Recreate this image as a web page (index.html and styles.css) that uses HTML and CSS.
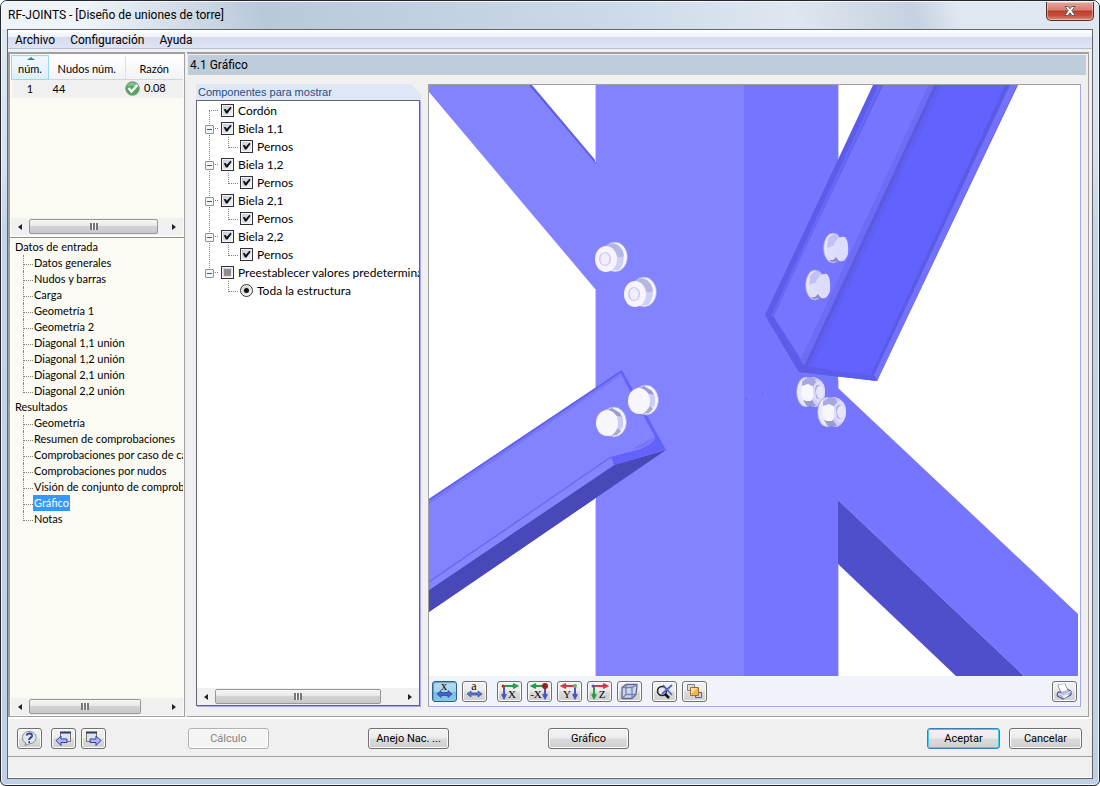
FILE: index.html
```html
<!DOCTYPE html>
<html lang="es">
<head>
    <meta charset="UTF-8">
    <meta name="viewport" content="width=device-width, initial-scale=1.0">
    <title>RF-JOINTS - [Diseño de uniones de torre]</title>
    <link rel="stylesheet" href="styles.css">
</head>
<body>
<div class="window">
    <header class="titlebar">
        <h1>RF-JOINTS - [Diseño de uniones de torre]</h1>
        <button class="close" aria-label="Cerrar">
            <svg width="14" height="12" viewBox="0 0 14 12"><path d="M2 1.500h3.200l1.800 2.300 1.800-2.300h3.200l-3.200 4.200 3.500 4.800H9L7 7.800l-2 2.700H1.700l3.500-4.800z" fill="#fff" stroke="#5b5d6b"/></svg>
        </button>
    </header>

    <div class="client">
        <nav class="menu">
            <a href="#">Archivo</a>
            <a href="#">Configuración</a>
            <a href="#">Ayuda</a>
        </nav>

        <div class="work">
            <aside class="sidebar">
                <div class="cases">
                    <table>
                        <thead>
                            <tr><th class="sorted">núm.</th><th>Nudos núm.</th><th class="ratio">Razón</th></tr>
                        </thead>
                        <tbody>
                            <tr>
                                <td class="num">1</td>
                                <td class="node">44</td>
                                <td class="value"><svg width="15" height="15" viewBox="0 0 15 15"><circle cx="7.500" cy="7.500" r="6.800" fill="#4fa85c" stroke="#8a938c"/><path d="M2 5a6 6 0 0 1 11 0z" fill="#7cc284"/><path d="M3.500 7l3 3.500 6-6.500" fill="none" stroke="#fff" stroke-width="2.400"/></svg>0.08</td>
                            </tr>
                        </tbody>
                    </table>
                    <div class="scrollbar">
                        <button class="arrow prev" aria-label="Izquierda"></button>
                        <div class="track"><div class="thumb thumb-cases"></div></div>
                        <button class="arrow next" aria-label="Derecha"></button>
                    </div>
                </div>

                <div class="navigator">
                    <div class="nav-tree">
                        <h2>Datos de entrada</h2>
                        <ul>
                            <li><a href="#">Datos generales</a></li>
                            <li><a href="#">Nudos y barras</a></li>
                            <li><a href="#">Carga</a></li>
                            <li><a href="#">Geometría 1</a></li>
                            <li><a href="#">Geometría 2</a></li>
                            <li><a href="#">Diagonal 1,1 unión</a></li>
                            <li><a href="#">Diagonal 1,2 unión</a></li>
                            <li><a href="#">Diagonal 2,1 unión</a></li>
                            <li><a href="#">Diagonal 2,2 unión</a></li>
                        </ul>
                        <h2>Resultados</h2>
                        <ul>
                            <li><a href="#">Geometría</a></li>
                            <li><a href="#">Resumen de comprobaciones</a></li>
                            <li><a href="#">Comprobaciones por caso de carga</a></li>
                            <li><a href="#">Comprobaciones por nudos</a></li>
                            <li><a href="#">Visión de conjunto de comprobaciones</a></li>
                            <li><a href="#" class="active">Gráfico</a></li>
                            <li><a href="#">Notas</a></li>
                        </ul>
                    </div>
                    <div class="scrollbar">
                        <button class="arrow prev" aria-label="Izquierda"></button>
                        <div class="track"><div class="thumb thumb-nav"></div></div>
                        <button class="arrow next" aria-label="Derecha"></button>
                    </div>
                </div>
            </aside>

            <main class="panel">
                <h2 class="panel-title">4.1 Gráfico</h2>
                <div class="panel-body">
                    <section class="components">
                        <h3>Componentes para mostrar</h3>
                        <div class="component-box">
                            <ul class="component-tree">
                                <li>
                                    <div class="node-row"><label><input type="checkbox" checked>Cordón</label></div>
                                </li>
                                <li>
                                    <div class="node-row"><button class="expander" aria-label="Contraer"></button><label><input type="checkbox" checked>Biela 1,1</label></div>
                                    <div class="node-row child"><label><input type="checkbox" checked>Pernos</label></div>
                                </li>
                                <li>
                                    <div class="node-row"><button class="expander" aria-label="Contraer"></button><label><input type="checkbox" checked>Biela 1,2</label></div>
                                    <div class="node-row child"><label><input type="checkbox" checked>Pernos</label></div>
                                </li>
                                <li>
                                    <div class="node-row"><button class="expander" aria-label="Contraer"></button><label><input type="checkbox" checked>Biela 2,1</label></div>
                                    <div class="node-row child"><label><input type="checkbox" checked>Pernos</label></div>
                                </li>
                                <li>
                                    <div class="node-row"><button class="expander" aria-label="Contraer"></button><label><input type="checkbox" checked>Biela 2,2</label></div>
                                    <div class="node-row child"><label><input type="checkbox" checked>Pernos</label></div>
                                </li>
                                <li>
                                    <div class="node-row"><button class="expander" aria-label="Contraer"></button><label><input type="checkbox" class="mixed">Preestablecer valores predeterminados</label></div>
                                    <div class="node-row child"><label><input type="radio" name="preset" checked>Toda la estructura</label></div>
                                </li>
                            </ul>
                            <div class="scrollbar">
                                <button class="arrow prev" aria-label="Izquierda"></button>
                                <div class="track"><div class="thumb thumb-comp"></div></div>
                                <button class="arrow next" aria-label="Derecha"></button>
                            </div>
                        </div>
                    </section>

                    <section class="viewer">
                        <svg class="scene" viewBox="429 85 649 591" preserveAspectRatio="xMidYMid slice">
                            <defs>
                                <!-- nut seen from the front left -->
                                <g id="nut-left">
                                    <ellipse cx="4" cy="0" rx="12.500" ry="15" fill="#f6f5ff" stroke="#9a9ad0" stroke-width=".6"/>
                                    <path d="M-3-12L5-13Q12-10 13-1 13 8 8 13L-3 14z" fill="#cfcff9"/>
                                    <path d="M-6-11Q0-15 5-13 11-10 13-2 9 2 6-1L-1-9z" fill="#b6b6e4"/>
                                    <ellipse cx="-5" cy="2" rx="11" ry="13" fill="#f6f5ff"/>
                                    <ellipse cx="-6" cy="2" rx="6" ry="7" fill="#c9c9f5"/>
                                    <ellipse cx="-6" cy="2" rx="4.500" ry="6" fill="#efeeff"/>
                                </g>
                                <!-- bolt head of the lower left diagonal -->
                                <g id="head-left">
                                    <ellipse cx="3" cy="0" rx="12.500" ry="15" fill="#f4f4ff" stroke="#a5a5d5" stroke-width=".8"/>
                                    <path d="M-6-12L1-14 9-9 12-4 12 5 8 12-2 14z" fill="#dadaff"/>
                                    <path d="M-4-12L1-14 9-9 11-5 6-6z" fill="#9c9cce"/>
                                    <path d="M6-6L12-4V5L7 7z" fill="#cbcbf5"/>
                                    <path d="M4 10L7 6 10 9 6 13 0 14z" fill="#a9a9d8"/>
                                    <ellipse cx="-4" cy="1" rx="11" ry="13" fill="#f7f6ff"/>
                                </g>
                                <!-- bolt head of the upper right diagonal -->
                                <g id="head-right">
                                    <ellipse cx="-3" cy="0" rx="9.500" ry="15" fill="#e6e6ff" stroke="#a0a0dc" stroke-width=".8"/>
                                    <path d="M-8-9Q-2-17 3-12L1-3-9 0z" fill="#c1c1f6"/>
                                    <path d="M-9 0L-3-2 0 4 0 9-5 13-9 9z" fill="#dedeff"/>
                                    <path d="M-2-4Q3-13 9-11 13-7 12 6 9 15 3 13-1 9-1 6z" fill="#dcdcff"/>
                                    <path d="M-7 12L-3 12 0 9 3 13-4 14z" fill="#8c8cc2"/>
                                </g>
                                <!-- nut seen from the front right -->
                                <g id="nut-right">
                                    <ellipse cx="-5" cy="0" rx="9.500" ry="15" fill="#e8e8ff" stroke="#9a9ad0" stroke-width=".8"/>
                                    <path d="M-9-13L3-15Q14-12 14-1 14 11 5 15L-6 13z" fill="#cecef9"/>
                                    <path d="M-9-10L-4-14 4-14 5-9 2-6-3-8-9-5z" fill="#a8a8dc"/>
                                    <path d="M-8 8L1 8 5 14-4 14z" fill="#9b9bd0"/>
                                    <path d="M-9-6L-3-8 2-5 3 4 0 9-6 9-10 3z" fill="#f8f7ff"/>
                                    <ellipse cx="8" cy="0" rx="6" ry="11" fill="#dcdcff"/>
                                    <path d="M4-4L6-7H9V7L5 6z" fill="#a9a9df"/>
                                    <ellipse cx="9" cy="0" rx="4" ry="6.500" fill="#e5e5ff"/>
                                </g>
                            </defs>

                            <rect x="429" y="85" width="649" height="591" fill="#fff"/>
                            <!-- upper left diagonal -->
                            <path d="M429 85H531L596 162V290L429 92z" fill="#8383ff"/>
                            <path d="M529 85h3L596 161v3z" fill="#5d5de6"/>
                            <!-- lower right diagonal -->
                            <path d="M838 388L1078 614V676H1024L838 500z" fill="#7575ff"/>
                            <path d="M838 500L1024 676H956L838 564z" fill="#4f4fcb"/>
                            <!-- chord -->
                            <path d="M596 85H744V676H596z" fill="#8383ff"/>
                            <path d="M744 85H838V676H744z" fill="#7575ff"/>
                            <path d="M595.500 85V162M595.500 290V390M595.500 500V676M838.500 85V158M838.500 380V388M838.500 565V676" stroke="#c9c9ff"/>
                            <path d="M746 399h1M762 394h1" stroke="#5050c8"/>

                            <!-- lower left diagonal -->
                            <path d="M429 500L622 370 666 450 429 612z" fill="#8383ff"/>
                            <path d="M429 590L614 465 666 450 429 612z" fill="#4848b9"/>
                            <path d="M429 583L611 458 614 465 429 590z" fill="#8585ff"/>
                            <path d="M429 582L611 457" stroke="#6b6bee" stroke-width="1.500"/>
                            <path d="M429 500L622 371" stroke="#6060ee" stroke-width="2"/>
                            <path d="M429 503L620 375" stroke="#7676f7" stroke-width="2"/>
                            <path d="M620 372L622 370 666 450 614 465 611 457 640 449Q654 443 655 437z" fill="#6363fa"/>
                            <path d="M619 374L654 438Q653 444 640 449L612 456 600 440z" fill="#8383ff"/>
                            <path d="M654 437Q645 442 632 449 650 447 654 437z" fill="#7575f7"/>

                            <!-- upper right diagonal -->
                            <path d="M873 85H1018L877 381 799 372 765 315z" fill="#5c5cea"/>
                            <path d="M883 85H934L804 364 773 316z" fill="#7575ff"/>
                            <path d="M880 85L772 317" stroke="#6868f8" stroke-width="3"/>
                            <path d="M933 85L803 364" stroke="#6c6cf5" stroke-width="8"/>
                            <path d="M941 85H1008L872 376 807 367z" fill="#6262ff"/>
                            <path d="M936 85L806 366" stroke="#5b5be2" stroke-width="3"/>
                            <path d="M940 85L810 366" stroke="#5f5ff2" stroke-width="4"/>
                            <path d="M1007 85L873 374" stroke="#5a5ae5" stroke-width="3"/>
                            <path d="M1010 85h7L877 381 873 377z" fill="#7272fc"/>
                            <path d="M765 315L773 316 804 366 875 376 877 381 799 372z" fill="#5c5ceb"/>

                            <use href="#nut-left" x="611" y="257"/>
                            <use href="#nut-left" x="640" y="292"/>
                            <use href="#head-left" x="611" y="422"/>
                            <use href="#head-left" x="643" y="400"/>
                            <use href="#head-right" x="836" y="248"/>
                            <use href="#head-right" x="818" y="285"/>
                            <use href="#nut-right" x="811" y="392"/>
                            <use href="#nut-right" x="832" y="412"/>
                        </svg>

                        <div class="toolbar">
                            <button class="tool pressed" aria-label="Cotas">
                                <svg width="21" height="17" viewBox="0 0 21 17"><text x="10" y="7" class="glyph small">x</text><path d="M3 11l4-3.500v2h7v-2l4 3.500-4 3.500v-2H7v2z" fill="#4a62d0" stroke="#27408f" stroke-width=".7"/></svg>
                            </button>
                            <button class="tool" aria-label="Valores">
                                <svg width="21" height="17" viewBox="0 0 21 17"><text x="10" y="7" class="glyph small">a</text><path d="M3 11l4-3v2h7V8l4 3-4 3v-2H7v2z" fill="#5c73d8" stroke="#36468f" stroke-width=".7"/></svg>
                            </button>
                            <span class="spacer"></span>
                            <button class="tool" aria-label="Vista X">
                                <svg width="21" height="17" viewBox="0 0 21 17"><path d="M5 4v11M3 11l2 4 2-4" fill="none" stroke="#4a55c8" stroke-width="2"/><path d="M5 3h12M14 1l4 2-4 2" fill="none" stroke="#22a04a" stroke-width="2"/><circle cx="4" cy="3" r="1.500" fill="#c22"/><text x="13" y="15" class="glyph">X</text></svg>
                            </button>
                            <button class="tool" aria-label="Vista -X">
                                <svg width="21" height="17" viewBox="0 0 21 17"><path d="M16 4v11M14 11l2 4 2-4" fill="none" stroke="#4a55c8" stroke-width="2"/><path d="M4 3h10M7 1L3 3l4 2" fill="none" stroke="#22a04a" stroke-width="2"/><circle cx="16" cy="3" r="3" fill="#a11c1c"/><text x="7" y="15" class="glyph">-X</text></svg>
                            </button>
                            <button class="tool" aria-label="Vista Y">
                                <svg width="21" height="17" viewBox="0 0 21 17"><path d="M16 4v11M14 11l2 4 2-4" fill="none" stroke="#4a55c8" stroke-width="2"/><path d="M4 3h11M7 1L3 3l4 2" fill="none" stroke="#d43848" stroke-width="2"/><circle cx="16" cy="3" r="2" fill="#62b46c"/><text x="8" y="15" class="glyph">Y</text></svg>
                            </button>
                            <button class="tool" aria-label="Vista Z">
                                <svg width="21" height="17" viewBox="0 0 21 17"><path d="M5 4v11M3 11l2 4 2-4" fill="none" stroke="#22a04a" stroke-width="2"/><path d="M5 3h12M14 1l4 2-4 2" fill="none" stroke="#d43848" stroke-width="2"/><circle cx="4" cy="3" r="1.500" fill="#4a55c8"/><text x="13" y="15" class="glyph">Z</text></svg>
                            </button>
                            <button class="tool" aria-label="Isométrica">
                                <svg width="21" height="17" viewBox="0 0 21 17"><path d="M3 4.500l4-3h11l-1 10-4 4H3z" fill="#cfd7ee" stroke="#5b6793" stroke-width="1.300"/><path d="M3 4.500h10l5-3M13 4.500v11M7 1.500v10L3 15.500M7 11.500h10" fill="none" stroke="#7481ae" stroke-width="1.300"/></svg>
                            </button>
                            <span class="spacer"></span>
                            <button class="tool" aria-label="Zoom">
                                <svg width="21" height="17" viewBox="0 0 21 17"><circle cx="8" cy="8" r="4.500" fill="#e3e8f3" stroke="#222" stroke-width="1.500"/><path d="M11 11l4 4" stroke="#111" stroke-width="2.500"/><path d="M9 2l9 10M18 2L8 11" stroke="#4a68c8" stroke-width="1.800"/></svg>
                            </button>
                            <button class="tool" aria-label="Capas">
                                <svg width="21" height="17" viewBox="0 0 21 17"><path d="M3.500 1.500h7v6h-7z" fill="#d8dce5" stroke="#777f92"/><path d="M11.500 9.500h6v5h-6z" fill="#cdd3df" stroke="#58637c"/><path d="M6.500 4.500h8v8h-8z" fill="#f2b552" stroke="#a66d22"/><path d="M7 5h6l-6 6z" fill="#ffdfa0"/></svg>
                            </button>
                            <button class="tool print" aria-label="Imprimir">
                                <svg width="21" height="17" viewBox="0 0 21 17"><path d="M4 2l7-1 3 7-7 2z" fill="#fff" stroke="#8790b5"/><path d="M4 9l3 0 6-3 4 2v4l-8 4-6-3z" fill="#b3b9dd" stroke="#3f4677"/><path d="M4.500 2l6-1 3 6-6 2z" fill="#fff"/><path d="M4 10.500l5 2 8-4" fill="none" stroke="#e8eaff"/><path d="M9 13.500l4-2 2 1-5 3z" fill="#fff"/></svg>
                            </button>
                        </div>
                    </section>
                </div>
            </main>
        </div>

        <footer class="actions">
            <div class="action-icons">
                <button class="tool help" aria-label="Ayuda">
                    <svg width="21" height="17" viewBox="0 0 21 17"><path d="M10 1.500c4 0 7 2.500 7 6s-3 6-6 6l-5 2 1-2.500C4.500 12 3.500 10 3.500 7.500c0-3.500 3-6 6.500-6z" fill="#e3e6ed" stroke="#858b99"/><path d="M7.500 5.500c1-3 6-2.500 5.500.5C12.500 8 10 8 10 10M9.500 12h1.500" fill="none" stroke="#34488f" stroke-width="2"/></svg>
                </button>
                <button class="tool" aria-label="Anterior">
                    <svg width="21" height="17" viewBox="0 0 21 17"><path d="M7.500 2.500h10v9h-10z" fill="#dfe3ea" stroke="#777"/><path d="M7 2.500h11" stroke="#333a58" stroke-width="2"/><path d="M3 10.500l5-4.500v3h6v3.500H8v3z" fill="#aab8f5" stroke="#2e3e9e"/></svg>
                </button>
                <button class="tool" aria-label="Siguiente">
                    <svg width="21" height="17" viewBox="0 0 21 17"><path d="M3.500 2.500h10v9h-10z" fill="#dfe3ea" stroke="#777"/><path d="M3 2.500h11" stroke="#333a58" stroke-width="2"/><path d="M18 10.500L13 6v3H7v3.500h6v3z" fill="#aab8f5" stroke="#2e3e9e"/></svg>
                </button>
            </div>
            <div class="action-main">
                <button class="btn" disabled>Cálculo</button>
                <button class="btn">Anejo Nac. ...</button>
                <button class="btn">Gráfico</button>
            </div>
            <div class="action-end">
                <button class="btn default">Aceptar</button>
                <button class="btn">Cancelar</button>
            </div>
        </footer>
        <div class="statusbar"></div>
    </div>
</div>
</body>
</html>
```
FILE: styles.css
```css
* {
    box-sizing: border-box;
}
body {
    margin: 0;
    background-color: #fff;
    font-family: Roboto, "Liberation Sans", sans-serif;
    font-size: 12px;
    color: #000;
}
h1, h2, h3, ul {
    margin: 0;
    padding: 0;
    font-weight: normal;
    font-size: inherit;
    list-style: none;
}
a {
    color: inherit;
    text-decoration: none;
}
button {
    margin: 0;
    padding: 0;
    font-family: inherit;
    font-size: inherit;
    color: inherit;
}

/* Window frame */
.window {
    height: 100vh;
    display: flex;
    flex-direction: column;
    padding: 0 6px 6px;
    border: 1px solid #25272e;
    border-radius: 7px 7px 6px 6px;
    background: linear-gradient(#dfe9f2 0, #d5e2ee 160px, #c4d5e8 230px, #bfd0e4 100%);
    box-shadow: inset 0 0 0 1px #eef5fb;
}
.titlebar {
    display: flex;
    justify-content: space-between;
    height: 28px;
    margin: 0 -6px;
    padding: 0 5px 0 7px;
    border-radius: 6px 6px 0 0;
    background: linear-gradient(75deg, rgba(255,255,255,.5) 8%, rgba(175,193,212,.8) 24%, rgba(190,207,225,.6) 55%, rgba(220,230,240,.5) 72%, rgba(180,194,211,.6) 83%, rgba(222,232,241,.6) 87%);
    border-top: 1px solid #f3f7fb;
}
.titlebar h1 {
    line-height: 26px;
}
.close {
    width: 48px;
    height: 19px;
    border: 1px solid #542c2c;
    border-top: none;
    border-radius: 0 0 5px 5px;
    background: linear-gradient(#e5a59b 0, #d67d70 45%, #bd3a2a 50%, #c4513f 75%, #dc8a76 100%);
    box-shadow: inset 0 0 0 1px rgba(255,255,255,.4);
    display: flex;
    justify-content: center;
    align-items: center;
}
.client {
    flex: 1;
    min-height: 0;
    display: flex;
    flex-direction: column;
    border: 1px solid #63676d;
    background-color: #f0f0f0;
}
.menu {
    display: flex;
    gap: 15px;
    height: 19px;
    padding: 0 7px;
    line-height: 21px;
    border-bottom: 1px solid #b8c0d4;
    background: linear-gradient(#fff 0, #eef0f8 38%, #d7dcee 40%, #dde4f4 100%);
}

/* Main area */
.work {
    flex: 1;
    min-height: 0;
    display: flex;
    gap: 2px;
    padding: 3px 3px 0 0;
}
.sidebar {
    flex: none;
    width: 177px;
    display: flex;
    flex-direction: column;
    border: 1px solid #a0a0a0;
    border-width: 2px 1px 1px 2px;
    font-family: Lato, "Liberation Sans", sans-serif;
    font-size: 11px;
}
.cases {
    height: 184px;
    display: flex;
    flex-direction: column;
    justify-content: space-between;
    padding: 1px 1px 2px;
    border-bottom: 1px solid #8f8f8f;
    background-color: #fbfbf3;
}
.cases table {
    width: 100%;
    table-layout: fixed;
    border-collapse: collapse;
}
.cases th {
    height: 24px;
    padding: 2px 0 0;
    font-weight: normal;
    background: linear-gradient(#fff, #f1f2f4);
    border-right: 1px solid #dfe1e4;
    border-bottom: 1px solid #d5d5d5;
}
.cases th.sorted {
    width: 37px;
    border: 1px solid #96d9f9;
    background: linear-gradient(#f2f9fc, #dceef8);
    position: relative;
}
.cases th.sorted::before {
    content: "";
    position: absolute;
    top: 1px;
    left: 15px;
    border: 4px solid transparent;
    border-top: none;
    border-bottom: 3px solid #3f7ba5;
}
.cases th.ratio {
    width: 58px;
    border-right: none;
}
.cases td {
    height: 18px;
    padding: 0;
    background-color: #f0f0f0;
}
.cases .num {
    text-align: center;
}
.cases .node {
    padding-left: 4px;
}
.cases .value svg {
    vertical-align: -4px;
    margin-right: 4px;
}
.navigator {
    flex: 1;
    min-height: 0;
    display: flex;
    flex-direction: column;
    justify-content: space-between;
    padding: 1px 1px;
    background-color: #fbfbf3;
}
.nav-tree {
    overflow: hidden;
    white-space: nowrap;
    line-height: 16px;
}
.nav-tree h2 {
    padding-left: 4px;
}
.nav-tree ul {
    padding-left: 12px;
}
.nav-tree li {
    display: flex;
    height: 16px;
    position: relative;
    padding-left: 10px;
}
.nav-tree li::before {
    content: "";
    position: absolute;
    left: 0;
    top: 0;
    width: 9px;
    height: 9px;
    border: 1px dotted #808080;
    border-width: 0 0 1px 1px;
}
.nav-tree li:not(:last-child)::after {
    content: "";
    position: absolute;
    left: 0;
    top: 9px;
    height: 7px;
    border-left: 1px dotted #808080;
}
.nav-tree a {
    padding: 0 1px;
}
.nav-tree a.active {
    background-color: #3399ff;
    color: #fff;
}

/* Scroll bars */
.scrollbar {
    flex: none;
    display: flex;
    height: 17px;
    background-color: #f0f0f0;
}
.arrow {
    width: 18px;
    border: none;
    background: none;
    display: flex;
    justify-content: center;
    align-items: center;
}
.arrow::before {
    content: "";
    border: 3px solid transparent;
}
.arrow.prev::before {
    border-left: none;
    border-right: 4px solid #222;
}
.arrow.next::before {
    border-right: none;
    border-left: 4px solid #222;
}
.track {
    flex: 1;
    display: flex;
    padding: 1px 0;
}
.thumb {
    display: flex;
    justify-content: center;
    align-items: center;
    border: 1px solid #979797;
    border-radius: 2px;
    background: linear-gradient(#f6f6f6 0, #e8e8e8 45%, #d2d2d4 50%, #c9c9cb 100%);
}
.thumb::before {
    content: "";
    width: 8px;
    height: 7px;
    background: repeating-linear-gradient(90deg, #777 0 2px, #f4f4f4 2px 3px);
}
.thumb-cases {
    width: 95%;
}
.thumb-nav {
    width: 82%;
}
.thumb-comp {
    width: 89%;
}

/* Right panel */
.panel {
    flex: 1;
    min-width: 0;
    display: flex;
    flex-direction: column;
    padding: 1px 2px 9px 1px;
    border: 1px solid #a0a0a0;
    border-width: 2px 1px 1px 0;
}
.panel-title {
    height: 20px;
    line-height: 21px;
    padding-left: 2px;
    background-color: #bfcdda;
}
.panel-body {
    flex: 1;
    min-height: 0;
    display: flex;
    gap: 7px;
    padding: 9px 5px 0 8px;
}
.components {
    flex: none;
    width: 225px;
    display: flex;
    flex-direction: column;
}
.components h3 {
    height: 16px;
    padding-left: 2px;
    font-family: "Liberation Sans", Arial, sans-serif;
    font-size: 11px;
    line-height: 17px;
    color: #1f4e87;
    background-color: #dde7f5;
    clip-path: polygon(0 0, 215px 0, 100% 10px, 100% 100%, 0 100%);
}
.component-box {
    flex: 1;
    min-height: 0;
    display: flex;
    flex-direction: column;
    justify-content: space-between;
    border: 1px solid #646478;
    box-shadow: 1px 1px 0 #a8a8f0;
    margin: 0 1px 1px 0;
    background-color: #fff;
}
.component-tree {
    overflow: hidden;
    padding-left: 12px;
    font-family: Lato, "Liberation Sans", sans-serif;
    white-space: nowrap;
}
.component-tree li {
    position: relative;
}
.component-tree li:not(:last-child)::before {
    content: "";
    position: absolute;
    left: 0;
    top: 9px;
    height: 100%;
    border-left: 1px dotted #808080;
}
.node-row {
    position: relative;
    display: flex;
    align-items: center;
    height: 18px;
    padding-left: 12px;
}
.node-row::before {
    content: "";
    position: absolute;
    left: 0;
    top: 9px;
    width: 9px;
    border-top: 1px dotted #808080;
}
.node-row.child {
    padding-left: 31px;
}
.node-row.child::before {
    left: 19px;
    top: 0;
    height: 10px;
    border: 1px dotted #808080;
    border-width: 0 0 1px 1px;
}
.node-row label {
    display: flex;
    align-items: center;
    gap: 4px;
}
.expander {
    position: absolute;
    left: -4px;
    top: 6px;
    width: 9px;
    height: 9px;
    border: 1px solid #919191;
    border-radius: 1px;
    background: linear-gradient(#3c5a9c, #3c5a9c) center / 5px 1px no-repeat #f5f5f5;
}
input[type="checkbox"], input[type="radio"] {
    appearance: none;
    flex: none;
    width: 13px;
    height: 13px;
    margin: 0;
    border: 1px solid #2f3338;
    background: linear-gradient(135deg, #c3c8d2, #f6f7fa);
    box-shadow: inset 0 0 0 1px #f4f4f4;
    display: flex;
    justify-content: center;
    align-items: center;
}
input[type="checkbox"]:checked::before {
    content: "";
    width: 9px;
    height: 8px;
    background-color: #111;
    clip-path: polygon(8% 42%, 30% 38%, 42% 60%, 82% 8%, 96% 22%, 50% 94%, 32% 94%);
}
input.mixed::before {
    content: "";
    width: 7px;
    height: 7px;
    background-color: #8e8e8e;
}
input[type="radio"] {
    border-radius: 50%;
}
input[type="radio"]:checked::before {
    content: "";
    width: 5px;
    height: 5px;
    border-radius: 50%;
    background-color: #111;
}

/* Graphic view */
.viewer {
    flex: 1;
    min-width: 0;
    display: flex;
    flex-direction: column;
    border: 1px solid #a8a8f0;
    border-top-color: #a0a0a0;
    border-left-color: #a0a0a0;
    background-color: #fff;
}
.scene {
    flex: 1;
    min-height: 0;
    width: 100%;
    padding-right: 2px;
}
.toolbar {
    flex: none;
    display: flex;
    align-items: center;
    gap: 5px;
    height: 30px;
    padding: 1px 3px 0;
    background-color: #f0f4fa;
}
.spacer {
    width: 0;
}
.print {
    margin-left: auto;
}
.tool, .btn {
    display: flex;
    justify-content: center;
    align-items: center;
    height: 21px;
    border: 1px solid #707070;
    border-radius: 3px;
    background: linear-gradient(#f3f3f3 0, #ebebeb 48%, #dbdbdb 52%, #cfcfcf 100%);
    box-shadow: inset 0 0 0 1px #fbfbfb;
}
.tool {
    width: 25px;
}
.tool.pressed {
    border-color: #2c628b;
    background: linear-gradient(#b9dcf0 0, #a5d3ec 50%, #78bbe0 52%, #86c8ea 100%);
    box-shadow: inset 1px 1px 1px #6f9cb8;
}
.glyph {
    font-family: "Liberation Serif", "Times New Roman", serif;
    font-size: 11px;
    text-anchor: middle;
}
.glyph.small {
    font-size: 12px;
}

/* Bottom buttons and status bar */
.actions {
    flex: none;
    display: flex;
    height: 40px;
    padding: 9px 10px 0 9px;
    border-top: 2px solid #fff;
    border-bottom: 1px solid #a0a0a0;
    font-size: 11px;
}
.action-icons {
    display: flex;
    gap: 5px;
    width: 171px;
}
.help {
    margin-right: 4px;
}
.action-main {
    display: flex;
    gap: 99px;
}
.action-main .btn {
    width: 81px;
}
.action-end {
    display: flex;
    gap: 9px;
    margin-left: auto;
}
.action-end .btn {
    width: 73px;
}
.btn:disabled {
    color: #838383;
    border-color: #adb2b5;
    background: #f4f4f4;
}
.btn.default {
    border-color: #3c7fb1;
    box-shadow: inset 0 0 0 1px #48c8f5;
}
.statusbar {
    flex: none;
    height: 21px;
    border-bottom: 1px solid #fff;
}
```
